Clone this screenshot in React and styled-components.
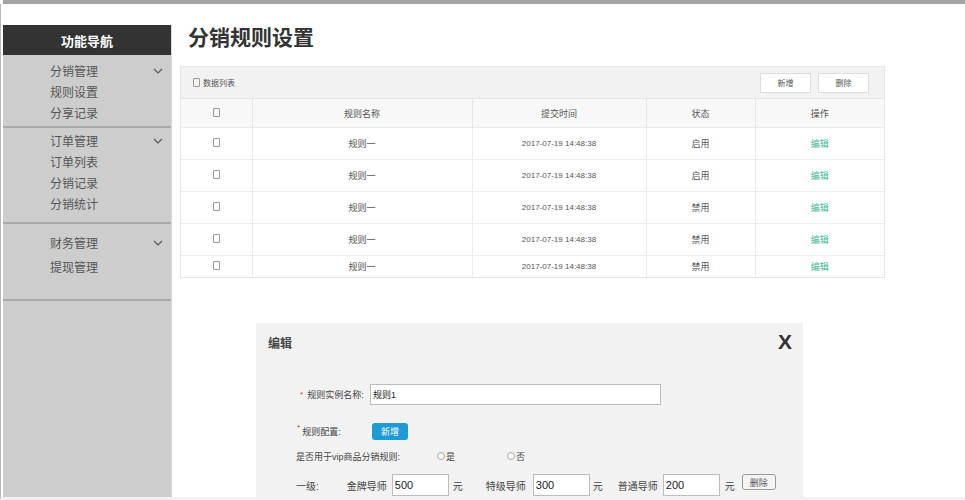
import React from 'react'
import styled, { createGlobalStyle } from 'styled-components'

const Global = createGlobalStyle`
  html, body {
    margin: 0;
    padding: 0;
    background: #fff;
    overflow: hidden;
  }
  body {
    font-family: "Liberation Sans", "Noto Sans CJK SC", sans-serif;
    color: #555;
  }
`;

const Page = styled.div`
  width: 965px;
  height: 500px;
  display: flex;
  flex-direction: column;
  overflow: hidden;
`;

const TopBar = styled.div`
  height: 4px;
  background: #a4a4a4;
  margin-left: 3px;
  flex-shrink: 0;
`;

const Body = styled.div`
  flex: 1;
  display: flex;
  border-left: 1px solid #b8b8b8;
  padding-left: 2px;
  border-bottom: 3px solid #f1f1f1;
  overflow: hidden;
`;

const Sidebar = styled.div`
  width: 168px;
  margin-top: 21px;
  background: #cdcdcd;
  border-right: 1px solid #d9d9d9;
  display: flex;
  flex-direction: column;
  flex-shrink: 0;
`;

const SideHead = styled.div`
  height: 30px;
  background: #333;
  color: #fff;
  font-size: 13px;
  font-weight: bold;
  display: flex;
  align-items: center;
  justify-content: center;
`;

const Group = styled.div`
  padding: ${p => p.$top}px 0 ${p => p.$bottom || 0}px;
  border-bottom: 2px solid #a9a9a9;
  min-height: ${p => p.$min || 0}px;
  box-sizing: border-box;
`;

const GroupTitle = styled.div`
  display: flex;
  align-items: center;
  justify-content: space-between;
  padding: 0 8px 0 47px;
  height: 21px;
  font-size: 12px;
  color: #555;
`;

const SideItem = styled.div`
  display: flex;
  align-items: center;
  padding-left: 47px;
  height: ${p => p.$h || 21}px;
  font-size: 12px;
  color: #555;
`;

const Chevron = () => (
  <svg width="10" height="6" viewBox="0 0 10 6">
    <polyline points="1,1 5,5 9,1" fill="none" stroke="#555" strokeWidth="1.1" />
  </svg>
);

const Main = styled.div`
  flex: 1;
  padding: 20px 0 0 8px;
  background: #fff;
`;

const Title = styled.h1`
  margin: 0 0 14px 8px;
  font-size: 21px;
  line-height: 28px;
  font-weight: bold;
  color: #333;
`;

const Panel = styled.div`
  width: 705px;
  border: 1px solid #e6e6e6;
  box-sizing: border-box;
`;

const PanelHead = styled.div`
  height: 31px;
  background: #f2f2f2;
  display: flex;
  align-items: center;
  justify-content: space-between;
  padding: 0 15px 0 12px;
`;

const PanelLabel = styled.div`
  font-size: 8px;
  color: #555;
  display: flex;
  align-items: center;
  gap: 3px;
`;

const Box = styled.span`
  display: inline-block;
  width: 5px;
  height: 7px;
  border: 1px solid #999;
  border-radius: 1px;
`;

const HeadButtons = styled.div`
  display: flex;
  gap: 7px;
`;

const LightButton = styled.button`
  width: 51px;
  height: 20px;
  background: #fff;
  border: 1px solid #ddd;
  font-family: inherit;
  font-size: 8px;
  color: #555;
  padding: 0;
`;

const Table = styled.table`
  width: 100%;
  border-collapse: collapse;
  table-layout: fixed;
`;

const Th = styled.th`
  height: 28px;
  padding: 0;
  background: #f8f8f8;
  font-weight: normal;
  font-size: 9px;
  color: #555;
  border-top: 1px solid #e6e6e6;
  border-left: 1px solid #e6e6e6;
  &:first-child { border-left: none; }
`;

const Td = styled.td`
  height: ${p => p.$h}px;
  padding: 0;
  text-align: center;
  font-size: ${p => p.$small ? 8 : 9}px;
  color: ${p => p.$green ? '#3bb891' : '#555'};
  border-top: 1px solid #ececec;
  border-left: 1px solid #ececec;
  &:first-child { border-left: none; }
`;

const Modal = styled.div`
  width: 547px;
  margin: 45px 0 0 76px;
  background: #f2f2f2;
  height: 200px;
`;

const ModalHead = styled.div`
  height: 38px;
  display: flex;
  align-items: center;
  justify-content: space-between;
  padding: 0 11px 0 12px;
`;

const ModalTitle = styled.div`
  font-size: 12px;
  font-weight: bold;
  color: #444;
`;

const Close = styled.div`
  font-size: 21px;
  font-weight: bold;
  color: #333;
`;

const Form = styled.div`
  padding: 23px 0 0 40px;
  display: flex;
  flex-direction: column;
`;

const Row = styled.div`
  display: flex;
  align-items: center;
  height: ${p => p.$h}px;
  margin-top: ${p => p.$mt || 0}px;
  padding-left: ${p => p.$pl || 0}px;
  font-size: 9px;
  color: #444;
`;

const Label = styled.div`
  width: ${p => p.$w}px;
  display: flex;
  align-items: center;
  flex-shrink: 0;
`;

const Star = styled.span`
  color: #e03030;
  font-size: 8px;
  margin-right: ${p => p.$gap}px;
  position: relative;
  top: ${p => p.$sup ? -4 : 0}px;
`;

const TextInput = styled.div`
  width: ${p => p.$w}px;
  height: ${p => p.$h}px;
  box-sizing: border-box;
  background: #fff;
  border: 1px solid #bdbdbd;
  font-size: ${p => p.$fs || 9}px;
  color: #222;
  padding-left: 2px;
  display: flex;
  align-items: center;
  flex-shrink: 0;
`;

const BlueButton = styled.button`
  width: 36px;
  height: 17px;
  background: #1e9ad6;
  color: #fff;
  border: none;
  border-radius: 3px;
  font-family: inherit;
  font-size: 9px;
  padding: 0;
`;

const Radio = styled.span`
  display: inline-flex;
  align-items: center;
  gap: 1px;
  margin-left: ${p => p.$ml}px;
  &::before {
    content: "";
    width: 6px;
    height: 6px;
    border-radius: 50%;
    border: 1px solid #aaa;
    background: #f8f8f8;
  }
`;

const Word = styled.span`
  font-size: 10px;
  margin-left: ${p => p.$ml || 0}px;
  margin-right: ${p => p.$mr || 0}px;
  color: #444;
  white-space: nowrap;
`;

const SmallButton = styled.button`
  width: 34px;
  height: 16px;
  margin-left: 7px;
  background: #f4f4f4;
  border: 1px solid #999;
  border-radius: 3px;
  font-family: inherit;
  font-size: 9px;
  color: #555;
  padding: 0;
  align-self: flex-start;
`;

const rows = [
  { state: '启用', h: 31 },
  { state: '启用', h: 31 },
  { state: '禁用', h: 31 },
  { state: '禁用', h: 31 },
  { state: '禁用', h: 21 },
];

const App = () => {
  return (
    <Page>
      <Global />
      <TopBar />
      <Body>
        <Sidebar>
          <SideHead>功能导航</SideHead>
          <Group $top={5} $bottom={3}>
            <GroupTitle>分销管理<Chevron /></GroupTitle>
            <SideItem>规则设置</SideItem>
            <SideItem>分享记录</SideItem>
          </Group>
          <Group $top={2} $bottom={8}>
            <GroupTitle>订单管理<Chevron /></GroupTitle>
            <SideItem>订单列表</SideItem>
            <SideItem>分销记录</SideItem>
            <SideItem>分销统计</SideItem>
          </Group>
          <Group $top={8} $min={77}>
            <GroupTitle>财务管理<Chevron /></GroupTitle>
            <SideItem $h={26}>提现管理</SideItem>
          </Group>
        </Sidebar>

        <Main>
          <Title>分销规则设置</Title>
          <Panel>
            <PanelHead>
              <PanelLabel><Box />数据列表</PanelLabel>
              <HeadButtons>
                <LightButton>新增</LightButton>
                <LightButton>删除</LightButton>
              </HeadButtons>
            </PanelHead>
            <Table>
              <colgroup>
                <col style={{ width: 71 }} />
                <col style={{ width: 220 }} />
                <col style={{ width: 174 }} />
                <col style={{ width: 109 }} />
                <col />
              </colgroup>
              <thead>
                <tr>
                  <Th><Box /></Th>
                  <Th>规则名称</Th>
                  <Th>提交时间</Th>
                  <Th>状态</Th>
                  <Th>操作</Th>
                </tr>
              </thead>
              <tbody>
                {rows.map((r, i) => (
                  <tr key={i}>
                    <Td $h={r.h}><Box /></Td>
                    <Td $h={r.h}>规则一</Td>
                    <Td $h={r.h} $small>2017-07-19 14:48:38</Td>
                    <Td $h={r.h}>{r.state}</Td>
                    <Td $h={r.h} $green>编辑</Td>
                  </tr>
                ))}
              </tbody>
            </Table>
          </Panel>

          <Modal>
            <ModalHead>
              <ModalTitle>编辑</ModalTitle>
              <Close>X</Close>
            </ModalHead>
            <Form>
              <Row $h={20} $pl={4}>
                <Label $w={70}><Star $gap={4}>*</Star>规则实例名称:</Label>
                <TextInput $w={291} $h={21}>规则1</TextInput>
              </Row>
              <Row $h={17} $mt={19} $pl={1}>
                <Label $w={75}><Star $gap={2} $sup>*</Star>规则配置:</Label>
                <BlueButton>新增</BlueButton>
              </Row>
              <Row $h={14} $mt={9}>
                <Label $w={141}>是否用于vip商品分销规则:</Label>
                <Radio $ml={0}>是</Radio>
                <Radio $ml={52}>否</Radio>
              </Row>
              <Row $h={22} $mt={11}>
                <Word $mr={28}>一级:</Word>
                <Word $mr={5}>金牌导师</Word>
                <TextInput $w={57} $h={22} $fs={11}>500</TextInput>
                <Word $ml={4} $mr={23}>元</Word>
                <Word $mr={7}>特级导师</Word>
                <TextInput $w={57} $h={22} $fs={11}>300</TextInput>
                <Word $ml={3} $mr={15}>元</Word>
                <Word $mr={5}>普通导师</Word>
                <TextInput $w={57} $h={22} $fs={11}>200</TextInput>
                <Word $ml={5}>元</Word>
                <SmallButton>删除</SmallButton>
              </Row>
            </Form>
          </Modal>
        </Main>
      </Body>
    </Page>
  )
}

export default App
